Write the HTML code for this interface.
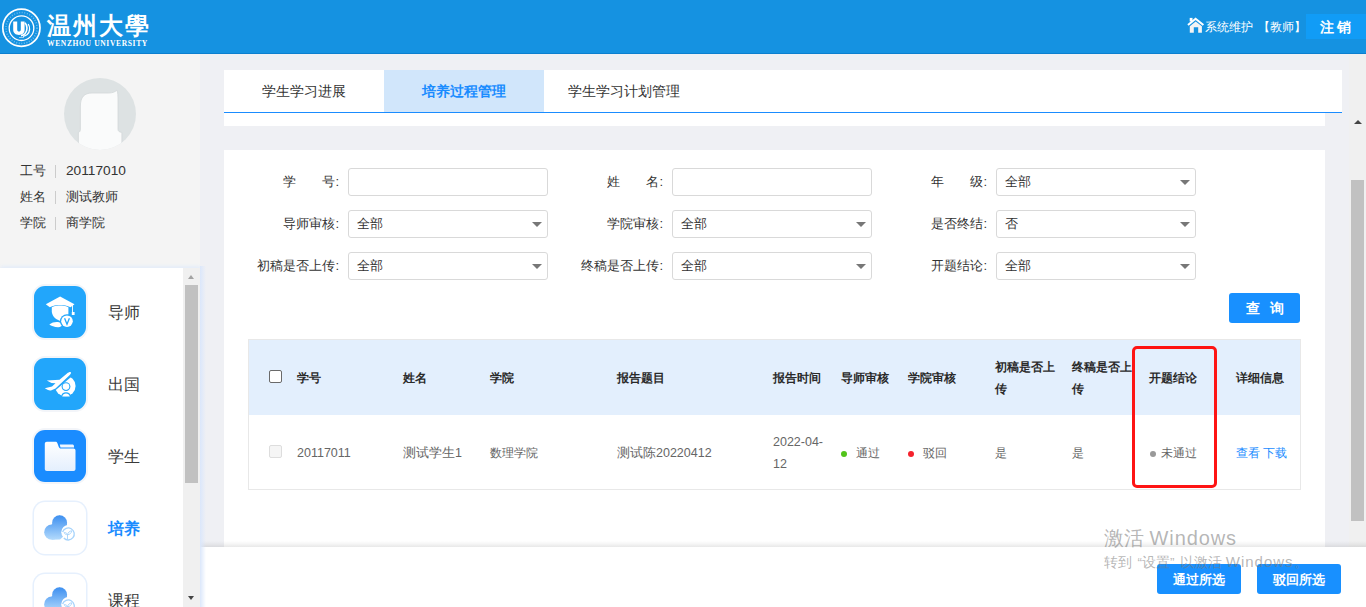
<!DOCTYPE html>
<html><head><meta charset="utf-8">
<style>
*{margin:0;padding:0;box-sizing:border-box}
html,body{width:1366px;height:607px;overflow:hidden;background:#eff0f4;font-family:"Liberation Sans",sans-serif;color:#333}
.abs{position:absolute}
#hdr{position:absolute;left:0;top:0;width:1366px;height:54px;background:#1592e1;border-bottom:1px solid #0b7fcf}
#side{position:absolute;left:0;top:54px;width:200px;height:553px;background:#f4f4f4}
#main{position:absolute;left:200px;top:54px;width:1166px;height:553px;background:#eff0f4}
.card{position:absolute;background:#fff}
.tab{position:absolute;top:0;height:42px;width:160px;text-align:center;line-height:42px;font-size:14px;color:#333}
.tab.act{background:#d1e6fb;color:#1a8cff;font-weight:bold}
.lbl{position:absolute;font-size:13px;color:#333;text-align:right;width:98px;line-height:28px;height:28px}
.inp{position:absolute;width:200px;height:28px;border:1px solid #d9d9d9;border-radius:3px;background:#fff;font-size:13px;line-height:26px;padding-left:8px;color:#333}
.sel:after{content:"";position:absolute;right:5px;top:11px;border-left:5px solid transparent;border-right:5px solid transparent;border-top:5px solid #777}
.btn{position:absolute;background:#1890ff;color:#fff;border-radius:3px;text-align:center;font-size:14px}
.th{position:absolute;font-size:12px;font-weight:bold;color:#2a2a2a;line-height:22px}
.td{position:absolute;font-size:12px;color:#666;line-height:22px}
.dot{display:inline-block;width:6px;height:6px;border-radius:3px;margin-right:9px;vertical-align:middle;position:relative;top:0px}
.sb-arrow-up{position:absolute;width:0;height:0;border-left:5px solid transparent;border-right:5px solid transparent;border-bottom:5px solid #555}
.sb-arrow-dn{position:absolute;width:0;height:0;border-left:5px solid transparent;border-right:5px solid transparent;border-top:5px solid #555}
.mi{position:absolute;left:34px;width:52px;height:52px;border-radius:11px}
.mt{position:absolute;left:108px;font-size:16px;color:#3a3a3a;line-height:22px}
</style></head><body>
<!-- header -->
<div id="hdr">
<svg class="abs" style="left:0;top:6px" width="44" height="44" viewBox="0 0 44 44">
<circle cx="21.4" cy="21.8" r="18.6" fill="none" stroke="#fff" stroke-width="1.7"/>
<circle cx="21.5" cy="22.2" r="12.3" fill="none" stroke="#fff" stroke-width="1.3"/>
<circle cx="21.5" cy="22" r="15.5" fill="none" stroke="#fff" stroke-width="1.6" stroke-dasharray="1 1.6" opacity="0.38"/>
<path d="M13.2 15.6H17.2V23.6C17.2 25 18 25.6 19 25.6S20.8 25 20.8 23.6V15.6H24.6V23.8C24.6 27 22.4 29 19 29S13.2 27 13.2 23.8z" fill="#fff"/>
<path d="M25 16.8C27.5 19.5 27.8 24.5 25 27.6C23.8 28.8 22.3 29.4 21 29.6" fill="none" stroke="#fff" stroke-width="1.6"/>
<path d="M28.2 18C30.3 21 30.2 25.8 27.2 28.6C26 29.6 24.5 30.2 23 30.3" fill="none" stroke="#fff" stroke-width="1.3"/>
<rect x="19" y="31" width="5" height="0.8" fill="#fff" opacity="0.7"/>
</svg>
<div class="abs" style="left:47px;top:13px;font-family:'Liberation Serif',serif;font-size:24px;line-height:26px;color:#fff;font-weight:600;letter-spacing:2px;white-space:nowrap">温州大學</div>
<div class="abs" style="left:47px;top:39.5px;font-family:'Liberation Serif',serif;font-size:7.6px;line-height:8px;color:#fff;font-weight:bold;letter-spacing:0.6px;white-space:nowrap">WENZHOU UNIVERSITY</div>
<svg class="abs" style="left:1187px;top:17px" width="18" height="16" viewBox="0 0 18 16">
<path d="M1 8L8.6 1.8L16.4 8" fill="none" stroke="#fff" stroke-width="2.1"/><rect x="2.7" y="0.9" width="2.8" height="3.6" fill="#fff"/><path d="M2.8 15.8V9.2L8.7 4.6L14.9 9.2V15.8H11.2V10.3H6.8V15.8z" fill="#f4f4f4"/>
</svg>
<div class="abs" style="left:1205px;top:19px;font-size:12px;line-height:16px;color:#fff;white-space:nowrap">系统维护</div>
<div class="abs" style="left:1258px;top:19px;font-size:12px;line-height:16px;color:#fff;white-space:nowrap">【教师】</div>
<div class="abs" style="left:1306px;top:14px;width:60px;height:25px;background:#119cf6"></div>
<div class="abs" style="left:1320px;top:17px;font-size:14px;line-height:20px;color:#fff;white-space:nowrap;font-weight:bold">注<span style="margin-left:3px">销</span></div>
</div>

<!-- sidebar -->
<div id="side">
<svg class="abs" style="left:64px;top:24px" width="72" height="72" viewBox="0 0 72 72">
<defs><clipPath id="cc"><circle cx="36" cy="36" r="36"/></clipPath></defs>
<circle cx="36" cy="36" r="36" fill="#dde2e3"/>
<g clip-path="url(#cc)">
<path d="M14.4 74V54.5C15.8 54 16.4 53 16.4 51V28C16.4 19 20.5 15 28 15H44.5C48.5 15 51 14 52.8 12.2C54 14.5 54 18 54 22V51C54 53 55 54 57.9 54.5V74z" fill="#fafbfb" stroke="#d3d8d9" stroke-width="0.8"/>
</g>
</svg>
<div class="abs" style="left:20px;top:108px;font-size:13px;line-height:18px;color:#333;white-space:nowrap">工号</div>
<div class="abs" style="left:55px;top:111px;width:1px;height:13px;background:#ccc"></div>
<div class="abs" style="left:66px;top:108px;font-size:13.7px;line-height:18px;color:#333;white-space:nowrap">20117010</div>
<div class="abs" style="left:20px;top:134px;font-size:13px;line-height:18px;color:#333;white-space:nowrap">姓名</div>
<div class="abs" style="left:55px;top:137px;width:1px;height:13px;background:#ccc"></div>
<div class="abs" style="left:66px;top:134px;font-size:13px;line-height:18px;color:#333;white-space:nowrap">测试教师</div>
<div class="abs" style="left:20px;top:160px;font-size:13px;line-height:18px;color:#333;white-space:nowrap">学院</div>
<div class="abs" style="left:55px;top:163px;width:1px;height:13px;background:#ccc"></div>
<div class="abs" style="left:66px;top:160px;font-size:13px;line-height:18px;color:#333;white-space:nowrap">商学院</div>
<!-- menu panel -->
<div class="abs" style="left:0;top:214px;width:200px;height:339px;background:#fff;box-shadow:0 -1px 4px #e3ecfa, 2px 0 4px #e3ecfa;overflow:hidden">
  <div class="mi" style="top:18px;background:#22a6fb;box-shadow:0 0 0 2px #f3f5f9"></div>
  <svg class="abs" style="left:34px;top:18px" width="52" height="52" viewBox="0 0 52 52">
    <path d="M11.8 18.3L26.1 10.6L40.5 18.3L36.5 21.2C33 19.6 30 19 26.1 19S19 19.6 15.8 21.2z" fill="#fff"/>
    <rect x="38.1" y="18.5" width="0.9" height="8" fill="#fff"/>
    <rect x="37.8" y="26" width="2.8" height="3" fill="#fff"/>
    <path d="M17.8 21.2C21 20 23.5 19.6 26.1 19.6S31 20 34.4 21.2V28.5C33 29 31.5 30 30.5 31.2C29.5 32.8 28.5 34.2 27.5 35C23 34.5 18.5 31 17.8 26z" fill="#fff"/>
    <path d="M15.3 38.5C18 36.2 22 35.6 25 36.2C26.5 36.6 27.8 37.5 28.6 38.6C28.2 40 26.5 41.3 24 41.2C20.5 41 17 39.8 15.3 38.5z" fill="#fff"/>
    <circle cx="33" cy="35.2" r="7" fill="#22a6fb"/>
    <circle cx="33" cy="35.2" r="5.8" fill="#fff"/>
    <path d="M30.6 32.3L33 38.2L35.4 32.3" fill="none" stroke="#22a6fb" stroke-width="1.3"/>
  </svg>
  <div class="mt" style="top:34px">导师</div>

  <div class="mi" style="top:90px;background:#22a6fb;box-shadow:0 0 0 2px #f3f5f9"></div>
  <svg class="abs" style="left:34px;top:90px" width="52" height="52" viewBox="0 0 52 52">
    <circle cx="31.3" cy="28" r="10.3" fill="#fff"/>
    <path d="M10 42.1L45 12.3L42 7H7V42.1z" fill="#22a6fb"/>
    <path d="M36.8 14.2C36 13.8 34.5 14.4 33 15.5L25.5 21.8L12.8 22.4L17.5 25L21.5 25.2L18 28.4L10.8 30.2L13.5 31.8C15 32.5 16.5 32.6 17.5 32.2L21.5 30.5L35 17.8C36.5 16.5 37.5 14.8 36.8 14.2z" fill="#fff"/>
    <circle cx="32" cy="28.6" r="4.4" fill="#22a6fb"/>
    <circle cx="32" cy="28.6" r="3.3" fill="#fff"/>
    <path d="M27 38.6C27.5 35.6 29.3 34.2 32 34.2S36.5 35.6 37 38.6z" fill="#22a6fb"/>
    <path d="M28.2 38.6C28.7 36.5 30 35.4 32 35.4S35.3 36.5 35.8 38.6z" fill="#fff"/>
  </svg>
  <div class="mt" style="top:106px">出国</div>

  <div class="mi" style="top:162px;background:#1a8cff;box-shadow:0 0 0 2px #f3f5f9"></div>
  <svg class="abs" style="left:34px;top:162px" width="52" height="52" viewBox="0 0 52 52">
    <defs><linearGradient id="fg" x1="0" y1="0" x2="0" y2="1"><stop offset="0" stop-color="#ffffff"/><stop offset="1" stop-color="#e4effd"/></linearGradient></defs>
    <path d="M25.8 14.6H38.2C39.3 14.6 40 15.3 40 16.3V17.5H26.5z" fill="#f0f6ff"/>
    <path d="M10.8 13.8C10.8 12.6 11.7 11.8 12.8 11.8H21.5C22.3 11.8 23 12.2 23.3 13L24.8 17C25.1 17.8 25.8 18.5 26.8 18.5H39.5C40.7 18.5 41.5 19.3 41.5 20.5V39C41.5 40.2 40.7 41 39.5 41H12.8C11.7 41 10.8 40.2 10.8 39z" fill="url(#fg)"/>
  </svg>
  <div class="mt" style="top:178px">学生</div>

  <div class="mi" style="top:234px;background:#fff;box-shadow:0 0 0 1.5px #e6f0fd"></div>
  <svg class="abs" style="left:34px;top:234px" width="52" height="52" viewBox="0 0 52 52">
    <defs><linearGradient id="cg" gradientUnits="userSpaceOnUse" x1="0" y1="13" x2="0" y2="38"><stop offset="0" stop-color="#3b8ef0"/><stop offset="1" stop-color="#b4dbfc"/></linearGradient></defs>
    <g fill="url(#cg)"><circle cx="25.6" cy="20.8" r="7.5"/><circle cx="17.8" cy="30.2" r="7.6"/><path d="M17.8 22.6L25.6 13.5L33 21.5L31 33L26 37.5L17.8 37.8z"/></g>
    <circle cx="34.5" cy="30.2" r="7.2" fill="#fff"/>
    <path d="M29.8 36A6 6 0 1 0 28.6 30" fill="none" stroke="#a6d3fb" stroke-width="1.3"/>
    <path d="M33.5 37V32.5C32.8 31 31.5 30.5 30.2 30.6C30.5 32 31.8 32.8 33.5 32.6M33.5 32.8C34 30.5 35.5 29 37.8 28.8C37.5 31 36 32.5 33.5 32.8" fill="none" stroke="#a6d3fb" stroke-width="0.9"/>
  </svg>
  <div class="mt" style="top:250px;color:#1a8cff;font-weight:bold">培养</div>

  <div class="mi" style="top:306px;background:#fff;box-shadow:0 0 0 1.5px #e6f0fd"></div>
  <svg class="abs" style="left:34px;top:306px" width="52" height="52" viewBox="0 0 52 52">
    <g fill="url(#cg)"><circle cx="25.6" cy="20.8" r="7.5"/><circle cx="17.8" cy="30.2" r="7.6"/><path d="M17.8 22.6L25.6 13.5L33 21.5L31 33L26 37.5L17.8 37.8z"/></g>
    <circle cx="34.5" cy="30.2" r="7.2" fill="#fff"/>
    <path d="M29.8 36A6 6 0 1 0 28.6 30" fill="none" stroke="#a6d3fb" stroke-width="1.3"/>
    <path d="M33.5 37V32.5C32.8 31 31.5 30.5 30.2 30.6C30.5 32 31.8 32.8 33.5 32.6M33.5 32.8C34 30.5 35.5 29 37.8 28.8C37.5 31 36 32.5 33.5 32.8" fill="none" stroke="#a6d3fb" stroke-width="0.9"/>
  </svg>
  <div class="mt" style="top:322px">课程</div>

  <!-- scrollbar -->
  <div class="abs" style="left:183px;top:0;width:17px;height:339px;background:#f0f0f0"></div>
  <div class="abs" style="left:188px;top:7px;width:0;height:0;border-left:3.8px solid transparent;border-right:3.8px solid transparent;border-bottom:4px solid #a3a3a3"></div>
  <div class="abs" style="left:185px;top:17px;width:13px;height:198px;background:#c1c1c1"></div>
  <div class="abs" style="left:188px;top:328px;width:0;height:0;border-left:3.8px solid transparent;border-right:3.8px solid transparent;border-top:4px solid #444"></div>
</div>
</div>

<!-- main -->
<div id="main">
<!-- right scrollbar -->
<div class="abs" style="left:1149px;top:0;width:17px;height:553px;background:#f0f0f0"></div>
<div class="abs" style="left:1153.5px;top:65.5px;width:0;height:0;border-left:4.2px solid transparent;border-right:4.2px solid transparent;border-bottom:4.5px solid #444"></div>
<div class="abs" style="left:1151px;top:126px;width:13px;height:341px;background:#c1c1c1"></div>
</div>
<!-- tabs card -->
<div class="card" style="left:224px;top:70px;width:1118px;height:42px">
  <div class="tab" style="left:0">学生学习进展</div>
  <div class="tab act" style="left:160px">培养过程管理</div>
  <div class="tab" style="left:320px">学生学习计划管理</div>
</div>
<div class="abs" style="left:224px;top:112px;width:1118px;height:1px;background:#1a8cff"></div>
<div class="card" style="left:224px;top:113px;width:1101px;height:13px"></div>
<!-- query card -->
<div class="card" style="left:224px;top:150px;width:1101px;height:400px">
</div>
<!-- form -->
<div class="lbl" style="left:241px;top:168px">学　　号:</div>
<div class="inp" style="left:348px;top:168px"></div>
<div class="lbl" style="left:565px;top:168px">姓　　名:</div>
<div class="inp" style="left:672px;top:168px"></div>
<div class="lbl" style="left:889px;top:168px">年　　级:</div>
<div class="inp sel" style="left:996px;top:168px">全部</div>

<div class="lbl" style="left:241px;top:210px">导师审核:</div>
<div class="inp sel" style="left:348px;top:210px">全部</div>
<div class="lbl" style="left:565px;top:210px">学院审核:</div>
<div class="inp sel" style="left:672px;top:210px">全部</div>
<div class="lbl" style="left:889px;top:210px">是否终结:</div>
<div class="inp sel" style="left:996px;top:210px">否</div>

<div class="lbl" style="left:241px;top:252px">初稿是否上传:</div>
<div class="inp sel" style="left:348px;top:252px">全部</div>
<div class="lbl" style="left:565px;top:252px">终稿是否上传:</div>
<div class="inp sel" style="left:672px;top:252px">全部</div>
<div class="lbl" style="left:889px;top:252px">开题结论:</div>
<div class="inp sel" style="left:996px;top:252px">全部</div>

<div class="btn" style="left:1229px;top:293px;width:71px;height:30px;line-height:30px;letter-spacing:10px;padding-left:10px;font-weight:600">查询</div>

<!-- table -->
<div class="abs" style="left:248px;top:339px;width:1053px;height:151px;border:1px solid #e8e8e8;background:#fff"></div>
<div class="abs" style="left:249px;top:340px;width:1051px;height:75px;background:#e3effd"></div>
<div class="abs" style="left:269px;top:370px;width:13px;height:13px;border:1px solid #6a6a6a;border-radius:2px;background:#fff"></div>
<div class="th" style="left:297px;top:367px">学号</div>
<div class="th" style="left:403px;top:367px">姓名</div>
<div class="th" style="left:490px;top:367px">学院</div>
<div class="th" style="left:617px;top:367px">报告题目</div>
<div class="th" style="left:773px;top:367px">报告时间</div>
<div class="th" style="left:841px;top:367px">导师审核</div>
<div class="th" style="left:908px;top:367px">学院审核</div>
<div class="th" style="left:995px;top:356px;width:62px">初稿是否上传</div>
<div class="th" style="left:1072px;top:356px;width:62px">终稿是否上传</div>
<div class="th" style="left:1149px;top:367px">开题结论</div>
<div class="th" style="left:1236px;top:367px">详细信息</div>

<div class="abs" style="left:269px;top:445px;width:13px;height:13px;border:1px solid #ddd;border-radius:2px;background:#f5f5f5"></div>
<div class="td" style="font-size:12.5px;left:297px;top:442px">20117011</div>
<div class="td" style="font-size:12.5px;left:403px;top:442px">测试学生1</div>
<div class="td" style="left:490px;top:442px">数理学院</div>
<div class="td" style="font-size:12.5px;left:617px;top:442px">测试陈20220412</div>
<div class="td" style="font-size:12.5px;left:773px;top:431px;width:56px">2022-04-12</div>
<div class="td" style="left:841px;top:442px"><span class="dot" style="background:#52c41a"></span>通过</div>
<div class="td" style="left:908px;top:442px"><span class="dot" style="background:#f5222d"></span>驳回</div>
<div class="td" style="left:995px;top:442px">是</div>
<div class="td" style="left:1072px;top:442px">是</div>
<div class="td" style="left:1150px;top:442px"><span class="dot" style="background:#999;margin-right:5px"></span>未通过</div>
<div class="td" style="left:1236px;top:442px;color:#1a8cff;font-size:12px">查看 下载</div>

<!-- red annotation -->
<div class="abs" style="left:1132px;top:346px;width:85px;height:142px;border:3px solid #fe1414;border-radius:5px"></div>

<!-- bottom bar -->
<div class="abs" style="left:200px;top:541px;width:1166px;height:6px;background:linear-gradient(to bottom,rgba(0,0,0,0) 0%,rgba(0,0,0,0.04) 50%,rgba(0,0,0,0.09) 100%)"></div>
<div class="abs" style="left:200px;top:547px;width:1166px;height:60px;background:#fff"></div>
<div class="btn" style="left:1157px;top:564px;width:84px;height:30px;line-height:32px;font-size:13px;font-weight:bold">通过所选</div>
<div class="btn" style="left:1257px;top:564px;width:84px;height:30px;line-height:32px;font-size:13px;font-weight:bold">驳回所选</div>

<!-- sidebar glow -->
<div class="abs" style="left:200px;top:266px;width:6px;height:341px;background:linear-gradient(to right,#dbe7fb,rgba(230,238,252,0))"></div>
<!-- windows watermark -->
<div class="abs" style="left:1104px;top:526px;font-size:20px;line-height:24px;color:rgba(120,120,120,0.55);white-space:nowrap">激活 <span style="letter-spacing:0.9px">Windows</span></div>
<div class="abs" style="left:1104px;top:553px;font-size:13.5px;line-height:18px;color:rgba(120,120,120,0.55);white-space:nowrap">转到<span style="display:inline-block;width:10px;text-align:right">“</span>设置<span style="display:inline-block;width:10px">”</span>以激活 <span style="font-size:15px;letter-spacing:1px">Windows</span>。</div>


</body></html>
